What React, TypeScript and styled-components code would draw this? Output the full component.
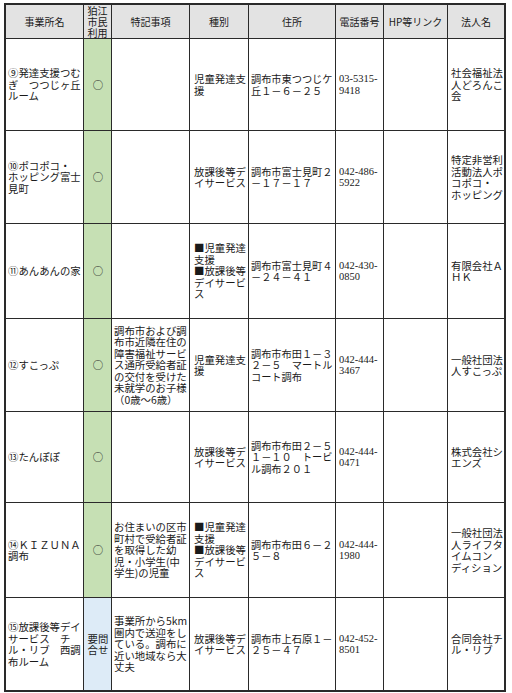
import React from "react";
import styled, { createGlobalStyle, css } from "styled-components";

type Row = {
  h: number;
  name: string[];
  use: string[];
  tone: "green" | "blue";
  note: string[];
  kind: string[];
  addr: string[];
  tel: string[];
  corp: string[];
};

const rows: Row[] = [
  {
    h: 92,
    name: ["⑨発達支援つむ", "ぎ　つつじヶ丘", "ルーム"],
    use: ["○"],
    tone: "green",
    note: [],
    kind: ["児童発達支", "援"],
    addr: ["調布市東つつじケ", "丘１－６－２５"],
    tel: ["03-5315-", "9418"],
    corp: ["社会福祉法", "人どろんこ", "会"],
  },
  {
    h: 93,
    name: ["⑩ポコポコ・", "ホッピング富士", "見町"],
    use: ["○"],
    tone: "green",
    note: [],
    kind: ["放課後等デ", "イサービス"],
    addr: ["調布市富士見町２", "－１７－１７"],
    tel: ["042-486-", "5922"],
    corp: ["特定非営利", "活動法人ポ", "コポコ・", "ホッピング"],
  },
  {
    h: 95,
    name: ["⑪あんあんの家"],
    use: ["○"],
    tone: "green",
    note: [],
    kind: ["■児童発達", "支援", "■放課後等", "デイサービ", "ス"],
    addr: ["調布市富士見町４", "－２４－４１"],
    tel: ["042-430-", "0850"],
    corp: ["有限会社Ａ", "ＨＫ"],
  },
  {
    h: 93,
    name: ["⑫すこっぷ"],
    use: ["○"],
    tone: "green",
    note: [
      "調布市および調",
      "布市近隣在住の",
      "障害福祉サービ",
      "ス通所受給者証",
      "の交付を受けた",
      "未就学のお子様",
      "（0歳～6歳）",
    ],
    kind: ["児童発達支", "援"],
    addr: ["調布市布田１－３", "２－５　マートル", "コート調布"],
    tel: ["042-444-", "3467"],
    corp: ["一般社団法", "人すこっぷ"],
  },
  {
    h: 91,
    name: ["⑬たんぽぽ"],
    use: ["○"],
    tone: "green",
    note: [],
    kind: ["放課後等デ", "イサービス"],
    addr: ["調布市布田２－５", "１－１０　トービ", "ル調布２０１"],
    tel: ["042-444-", "0471"],
    corp: ["株式会社シ", "エンズ"],
  },
  {
    h: 95,
    name: ["⑭ＫＩＺＵＮＡ", "調布"],
    use: ["○"],
    tone: "green",
    note: [
      "お住まいの区市",
      "町村で受給者証",
      "を取得した幼",
      "児・小学生(中",
      "学生)の児童",
    ],
    kind: ["■児童発達", "支援", "■放課後等", "デイサービ", "ス"],
    addr: ["調布市布田６－２", "５－８"],
    tel: ["042-444-", "1980"],
    corp: ["一般社団法", "人ライフタ", "イムコン", "ディション"],
  },
  {
    h: 92,
    name: ["⑮放課後等デイ", "サービス　チ", "ル・リブ　西調", "布ルーム"],
    use: ["要問", "合せ"],
    tone: "blue",
    note: [
      "事業所から5km",
      "圏内で送迎をし",
      "ている。調布に",
      "近い地域なら大",
      "丈夫",
    ],
    kind: ["放課後等デ", "イサービス"],
    addr: ["調布市上石原１－", "２５－４７"],
    tel: ["042-452-", "8501"],
    corp: ["合同会社チ", "ル・リブ"],
  },
];

const heads = [
  ["事業所名"],
  ["狛江", "市民", "利用"],
  ["特記事項"],
  ["種別"],
  ["住所"],
  ["電話番号"],
  ["HP等リンク"],
  ["法人名"],
];

function Lines({ items }: { items: string[] }) {
  return (
    <div>
      {items.map((t, i) => (
        <Line key={i}>{t}</Line>
      ))}
    </div>
  );
}

export default function App() {
  return (
    <Page>
      <GlobalStyle />
      <Grid $rows={rows.map((r) => r.h)}>
        {heads.map((h, i) => (
          <HeadCell key={i} $last={i === heads.length - 1}>
            <Lines items={h} />
          </HeadCell>
        ))}
        {rows.map((r, i) => {
          const bottom = i === rows.length - 1;
          return (
            <React.Fragment key={i}>
              <Cell $bottom={bottom}>
                <Lines items={r.name} />
              </Cell>
              <Cell $bottom={bottom} $tone={r.tone} $center>
                <Lines items={r.use} />
              </Cell>
              <Cell $bottom={bottom}>
                <Lines items={r.note} />
              </Cell>
              <Cell $bottom={bottom} $pad={4}>
                <Lines items={r.kind} />
              </Cell>
              <Cell $bottom={bottom} $size={10.2}>
                <Lines items={r.addr} />
              </Cell>
              <Cell $bottom={bottom} $phone>
                <Lines items={r.tel} />
              </Cell>
              <Cell $bottom={bottom} />
              <Cell $bottom={bottom} $last $pad={3}>
                <Lines items={r.corp} />
              </Cell>
            </React.Fragment>
          );
        })}
      </Grid>
    </Page>
  );
}

const GlobalStyle = createGlobalStyle`
  body {
    margin: 0;
    background: #ffffff;
    font-family: "Noto Sans CJK JP", sans-serif;
    color: #1a1a1a;
  }
`;

const Page = styled.div`
  padding: 3px 0 0 4px;
`;

const Grid = styled.div<{ $rows: number[] }>`
  display: grid;
  width: max-content;
  grid-template-columns: 78px 28px 78px 59px 87px 48px 64px 56px;
  grid-template-rows: 34px ${(p) => p.$rows.map((h) => `${h}px`).join(" ")};
  border: 2px solid #2a2a2a;
`;

const cellBase = css<{ $last?: boolean; $bottom?: boolean }>`
  box-sizing: border-box;
  display: flex;
  align-items: center;
  border-right: ${(p) => (p.$last ? "none" : "1px solid #2a2a2a")};
  border-bottom: ${(p) => (p.$bottom ? "none" : "1px solid #2a2a2a")};
  overflow: hidden;
`;

const HeadCell = styled.div<{ $last?: boolean }>`
  ${cellBase};
  justify-content: center;
  text-align: center;
  background: #e3e3e3;
  font-size: 10px;
  line-height: 11px;
`;

const Cell = styled.div<{
  $last?: boolean;
  $bottom?: boolean;
  $tone?: "green" | "blue";
  $center?: boolean;
  $phone?: boolean;
  $size?: number;
  $pad?: number;
}>`
  ${cellBase};
  justify-content: ${(p) => (p.$center ? "center" : "flex-start")};
  text-align: ${(p) => (p.$center ? "center" : "left")};
  padding: 0 1px 0 ${(p) => p.$pad ?? 2}px;
  background: ${(p) =>
    p.$tone === "green" ? "#c6e0b4" : p.$tone === "blue" ? "#ddebf7" : "#ffffff"};
  font-size: ${(p) => p.$size ?? 10.4}px;
  line-height: 11.5px;
  ${(p) =>
    p.$phone &&
    css`
      font-family: "Liberation Serif", serif;
      font-size: 10.5px;
      line-height: 11.5px;
      padding-left: 3px;
    `}
`;

const Line = styled.span`
  display: block;
  white-space: nowrap;
`;
